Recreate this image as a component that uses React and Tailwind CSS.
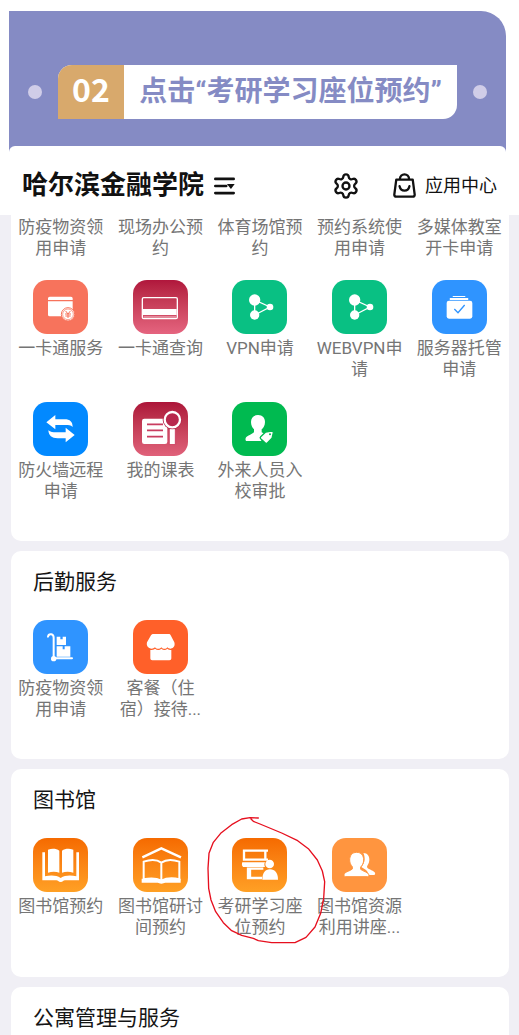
import { Settings } from "lucide-react";

function PayCardIcon() {
  return (
    <>
      <path fill="#fff" d="M50 50h64a5 5 0 0 1 5 5v5H45v-5a5 5 0 0 1 5-5zM45 64h74v40a5 5 0 0 1-5 5H50a5 5 0 0 1-5-5z" />
      <circle cx="105" cy="103" r="20" fill="#fff" stroke="#f7735c" strokeWidth="3" />
      <circle cx="105" cy="103" r="16" fill="none" stroke="#f7735c" strokeWidth="2" />
      <path fill="none" stroke="#f7735c" strokeWidth="3" d="m98 93 7 9 7-9M96 102h18M97 108h16M105 102v12" />
    </>
  );
}

function BankCardIcon() {
  return (
    <>
      <rect x="28" y="53" width="105" height="63" rx="4" fill="none" stroke="#fff" strokeWidth="4" />
      <path fill="#fff" d="M30 87h101v18H30z" />
      <path stroke="#fff" strokeWidth="2" d="M32 111h97" />
    </>
  );
}

function ShareNodesIcon() {
  return (
    <>
      <path fill="none" stroke="#fff" strokeWidth="4" d="M68 105V60l46 21z" />
      <circle cx="68" cy="60" r="17" fill="#fff" />
      <circle cx="68" cy="105" r="14" fill="#fff" />
      <circle cx="114" cy="81" r="10" fill="#fff" />
    </>
  );
}

function ServerBoxIcon() {
  return (
    <>
      <rect x="62" y="48" width="38" height="3" rx="1" fill="#fff" />
      <rect x="53" y="54" width="56" height="6" rx="2" fill="#fff" />
      <rect x="44" y="62" width="77" height="54" rx="7" fill="#fff" />
      <path fill="none" stroke="#2f94ff" strokeWidth="4" d="m67 87 11 11 20-23" />
    </>
  );
}

function SwapArrowsIcon() {
  return (
    <path
      fill="#fff"
      d="M40 61 67 39v13h28c16 0 24 8 24 23-6-6-12-6-22-6H67v13zM125 99 98 121v-12H74c-18 0-27-8-28-24 6 5 14 6 24 6h28V77z"
    />
  );
}

function TimetableIcon() {
  return (
    <>
      <rect x="27" y="50" width="76" height="76" rx="7" fill="#fff" />
      <path stroke="#c93d60" strokeWidth="5" d="M42 67h48M42 85h48M42 104h48" />
      <path stroke="#cf4c6b" strokeWidth="23" d="M118 84v44" />
      <path stroke="#fff" strokeWidth="15" d="M118 80v46" />
      <circle cx="118" cy="53" r="29" fill="#b8284d" />
      <circle cx="118" cy="53" r="23" fill="#b8284d" stroke="#fff" strokeWidth="7" />
    </>
  );
}

function VisitorIcon() {
  return (
    <>
      <path
        fill="#fff"
        d="M78 39c14 0 21 9 21 21 0 11-5 18-10 22v9l11 6-13 20H44c-4 0-5-8-1-12 6-5 17-8 23-14v-9c-5-5-9-12-9-22 0-12 7-21 21-21z"
      />
      <path
        fill="#fff"
        stroke="#00ba50"
        strokeWidth="4"
        strokeLinejoin="round"
        d="m101 90 18-3c4 0 5 2 5 5l-4 17-14 14c-2 2-4 2-6 0l-14-13c-2-2-2-4 0-6z"
      />
      <circle cx="114" cy="97" r="3" fill="#00ba50" />
    </>
  );
}

function TrolleyIcon() {
  return (
    <>
      <path
        fill="none"
        stroke="#fff"
        strokeWidth="6"
        strokeLinecap="round"
        d="M45 50c1-5 5-8 10-7 5 1 7 5 7 10v62h55"
      />
      <circle cx="62" cy="116" r="8" fill="#fff" />
      <path fill="#fff" d="M71 50h11v8h7v-8h10v25H71zM71 79h18v9h6v-9h17v31H71z" />
    </>
  );
}

function ShopIcon() {
  return (
    <>
      <path
        fill="#fff"
        d="M62 42h45c3 0 5 1 6 4l11 21c3 10-2 18-11 19-5 0-8-2-10-4-4 6-13 6-18 0-5 6-14 6-19 0-5 5-12 5-17 2-7-3-9-10-7-17l12-21c2-3 4-4 8-4z"
      />
      <path
        fill="#fff"
        d="M52 90c6 0 10-1 14-4 6 5 14 5 19 0 6 5 13 5 18 0 4 3 7 4 12 4v25c0 4-2 6-6 6H58c-4 0-6-2-6-6z"
      />
    </>
  );
}

function OpenBookIcon() {
  return (
    <>
      <path fill="#fff" d="M45 35c13-4 25-3 34 3v66c-10-4-23-4-34 0zM87 38c9-6 21-7 34-3v69c-11-4-24-4-34 0z" />
      <path
        fill="#fff"
        d="M28 43h8v72c16-4 34-4 47 5 13-9 31-9 47-5V43h8v84h-42c-5 0-6 5-13 5s-8-5-13-5H28z"
      />
    </>
  );
}

function BookHouseIcon() {
  return (
    <>
      <path fill="none" stroke="#fff" strokeWidth="7" d="m28 58 57-27 59 27" />
      <path
        fill="none"
        stroke="#fff"
        strokeWidth="6"
        d="M32 71c18-6 38-8 53 3 15-11 37-9 54-3v53c-17-4-38-4-54 4-15-8-35-8-53-4zM85 73v54"
      />
      <path fill="#fff" d="M26 122h9c18-3 36-2 50 5 15-7 36-8 50-5h8v12h-46c-5 0-6 3-12 3s-7-3-11-3H26z" />
    </>
  );
}

function StudySeatIcon() {
  return (
    <>
      <path fill="none" stroke="#fff" strokeWidth="7" d="M108 38H36v27h72M100 38v27" />
      <path fill="#fff" d="M31 73h68c-3 5-2 10 0 14H34c-5-3-5-10-3-14z" />
      <path fill="none" stroke="#fff" strokeWidth="7" d="M94 92H48v28h42M54 92v28" />
      <circle cx="113" cy="78" r="13" fill="#fff" />
      <path fill="#fff" d="M91 125c0-20 8-31 23-31s24 11 24 31z" />
    </>
  );
}

function PeopleIcon() {
  return (
    <>
      <path
        fill="#fff"
        d="M94 45c13 0 19 10 18 22-1 10-5 14-7 19 1 8 17 9 23 17 3 5 1 8-2 8h-16c-1-13-13-18-22-24 6-7 10-15 10-24 0-8-2-14-4-18z"
      />
      <path
        fill="#fff"
        stroke="#ff953f"
        strokeWidth="3"
        d="M74 43c14 0 21 10 21 23 0 10-5 17-9 21v7c7 6 21 8 24 15 2 5 0 7-4 7H41c-5 0-6-5-4-9 5-7 18-8 24-14v-7c-5-5-8-12-8-20 0-13 7-23 21-23z"
      />
    </>
  );
}

const clippedLabels = ["防疫物资领用申请", "现场办公预约", "体育场馆预约", "预约系统使用申请", "多媒体教室开卡申请"];

const generalApps = [
  { label: "一卡通服务", Icon: PayCardIcon, tile: "bg-[#f7735c]" },
  { label: "一卡通查询", Icon: BankCardIcon, tile: "bg-linear-to-b from-[#b0163c] to-[#e5647f]" },
  { label: "VPN申请", Icon: ShareNodesIcon, tile: "bg-[#09c083]" },
  { label: "WEBVPN申请", Icon: ShareNodesIcon, tile: "bg-[#09c083]" },
  { label: "服务器托管申请", Icon: ServerBoxIcon, tile: "bg-[#2f94ff]" },
  { label: "防火墙远程申请", Icon: SwapArrowsIcon, tile: "bg-[#0289ff]" },
  { label: "我的课表", Icon: TimetableIcon, tile: "bg-linear-to-b from-[#ac1439] to-[#e0617a]" },
  { label: "外来人员入校审批", Icon: VisitorIcon, tile: "bg-[#00ba50]" },
];

const logisticsApps = [
  { label: "防疫物资领用申请", Icon: TrolleyIcon, tile: "bg-[#2f94ff]" },
  { label: "客餐（住宿）接待...", Icon: ShopIcon, tile: "bg-[#ff6029]" },
];

const libraryApps = [
  { label: "图书馆预约", Icon: OpenBookIcon, tile: "bg-linear-to-b from-[#f56a00] to-[#ffa024]" },
  { label: "图书馆研讨间预约", Icon: BookHouseIcon, tile: "bg-linear-to-b from-[#f56a00] to-[#ffa024]" },
  { label: "考研学习座位预约", Icon: StudySeatIcon, tile: "bg-linear-to-b from-[#f56a00] to-[#ffa024]", marked: true },
  { label: "图书馆资源利用讲座...", Icon: PeopleIcon, tile: "bg-[#ff953f]" },
];

// Hand-drawn red ring round the entry the guide is pointing at
function RedRing() {
  return (
    <svg
      viewBox="-30 0 420 450"
      className="pointer-events-none absolute -top-[33px] left-1/2 z-10 h-[150px] w-[140px] -translate-x-1/2"
      aria-hidden="true"
    >
      <path
        fill="none"
        stroke="#e60f1e"
        strokeWidth="4"
        strokeLinejoin="round"
        strokeLinecap="round"
        d="M175 39 150 38 125 42 95 59 62 85 40 112 27 145 24 190 26 250 33 285 47 320 70 353 95 377 125 391 160 400 175 407 215 413 285 413 318 397 345 366 362 325 371 280 374 230 367 198 352 165 325 131 293 107 245 84 180 57 160 49 153 42"
      />
    </svg>
  );
}

function AppItem({ label, Icon, tile, marked }) {
  return (
    <a href="#" className="relative flex flex-col items-center gap-1">
      <span className={`h-[54px] w-[55px] overflow-hidden rounded-[14px] ${tile}`}>
        <svg viewBox="0 0 165 162" className="h-full w-full" aria-hidden="true">
          <Icon />
        </svg>
      </span>
      <span className="min-h-[42px] w-[88px] text-center text-[17px] leading-[21px] text-[#757575]">{label}</span>
      {marked && <RedRing />}
    </a>
  );
}

function AppGrid({ apps }) {
  return (
    <div className="grid grid-cols-5 gap-y-[22px]">
      {apps.map((app) => (
        <AppItem key={app.label} {...app} />
      ))}
    </div>
  );
}

function ServiceCard({ title, apps }) {
  return (
    <section className="rounded-[10px] bg-white pt-[14px] pb-[39px]">
      <h2 className="mb-[21px] pl-[22px] text-[21px] leading-[34px] text-[#151515]">{title}</h2>
      <AppGrid apps={apps} />
    </section>
  );
}

function StepBanner() {
  return (
    <div className="mr-[13px] ml-[9px] overflow-hidden rounded-tr-[25px] bg-[#858bc4] pt-[54px]">
      <div className="flex items-center gap-4 px-[19px]">
        <span className="size-[14px] shrink-0 rounded-full bg-[#d0cde8]" />
        <div className="flex h-[54px] flex-1 overflow-hidden rounded-tl-[14px] rounded-br-[14px] bg-white">
          <span className="flex w-[66px] items-center justify-center bg-[#d8a96c] pb-2 font-['Noto_Sans_CJK_SC',sans-serif] text-[32px] font-bold text-white">
            02
          </span>
          <h1 className="flex flex-1 items-center justify-center text-[28px] font-bold whitespace-nowrap text-[#858bc4]">
            点击“考研学习座位预约”
          </h1>
        </div>
        <span className="size-[14px] shrink-0 rounded-full bg-[#d0cde8]" />
      </div>
      <div className="mt-[27px] h-[6px] rounded-t-[6px] bg-white" />
    </div>
  );
}

function AppHeader() {
  return (
    <header className="flex h-[63px] items-center px-[22px] pt-1 text-[#111]">
      <button type="button" className="flex items-center gap-[10px] text-[26px] font-bold">
        哈尔滨金融学院
        <svg viewBox="0 0 62 52" className="h-[18px] w-[21px]" aria-hidden="true">
          <path stroke="currentColor" strokeWidth="8" strokeLinecap="round" d="M4 5h54M4 26h32M4 47h54" />
          <path fill="currentColor" d="M38 20h23L50 35z" />
        </svg>
      </button>
      <button type="button" aria-label="设置" className="ml-auto">
        <Settings size={28} strokeWidth={2} />
      </button>
      <button type="button" className="ml-8 flex items-center gap-2 text-[18px]">
        <svg viewBox="0 0 70 76" className="h-[25px] w-[25px]" fill="none" stroke="currentColor" strokeWidth="7" aria-hidden="true">
          <path strokeLinejoin="round" d="M10 20h50l6 46c0 4-2 6-6 6H10c-4 0-6-2-6-6z" />
          <path d="M21 19c0-20 28-20 28 0" />
          <path strokeLinecap="round" d="M20 40c4 18 26 18 30 0" />
        </svg>
        应用中心
      </button>
    </header>
  );
}

export default function App() {
  return (
    <div className="flex min-h-screen flex-col bg-[#f0eff5] font-[Roboto,'Noto_Sans_CJK_SC',sans-serif]">
      <div className="bg-white pt-[11px]">
        <StepBanner />
        <AppHeader />
      </div>

      <main className="flex flex-1 flex-col gap-[10px] pr-[10px] pl-[11px]">
        <section className="rounded-b-[10px] bg-white pt-[2px] pb-[39px]">
          <div className="mb-[21px] grid grid-cols-5 justify-items-center">
            {clippedLabels.map((label) => (
              <a key={label} href="#" className="w-[88px] text-center text-[17px] leading-[21px] text-[#757575]">
                {label}
              </a>
            ))}
          </div>
          <AppGrid apps={generalApps} />
        </section>

        <ServiceCard title="后勤服务" apps={logisticsApps} />
        <ServiceCard title="图书馆" apps={libraryApps} />

        <section className="flex-1 rounded-t-[10px] bg-white pt-[14px]">
          <h2 className="pl-[22px] text-[21px] leading-[34px] text-[#151515]">公寓管理与服务</h2>
        </section>
      </main>
    </div>
  );
}
